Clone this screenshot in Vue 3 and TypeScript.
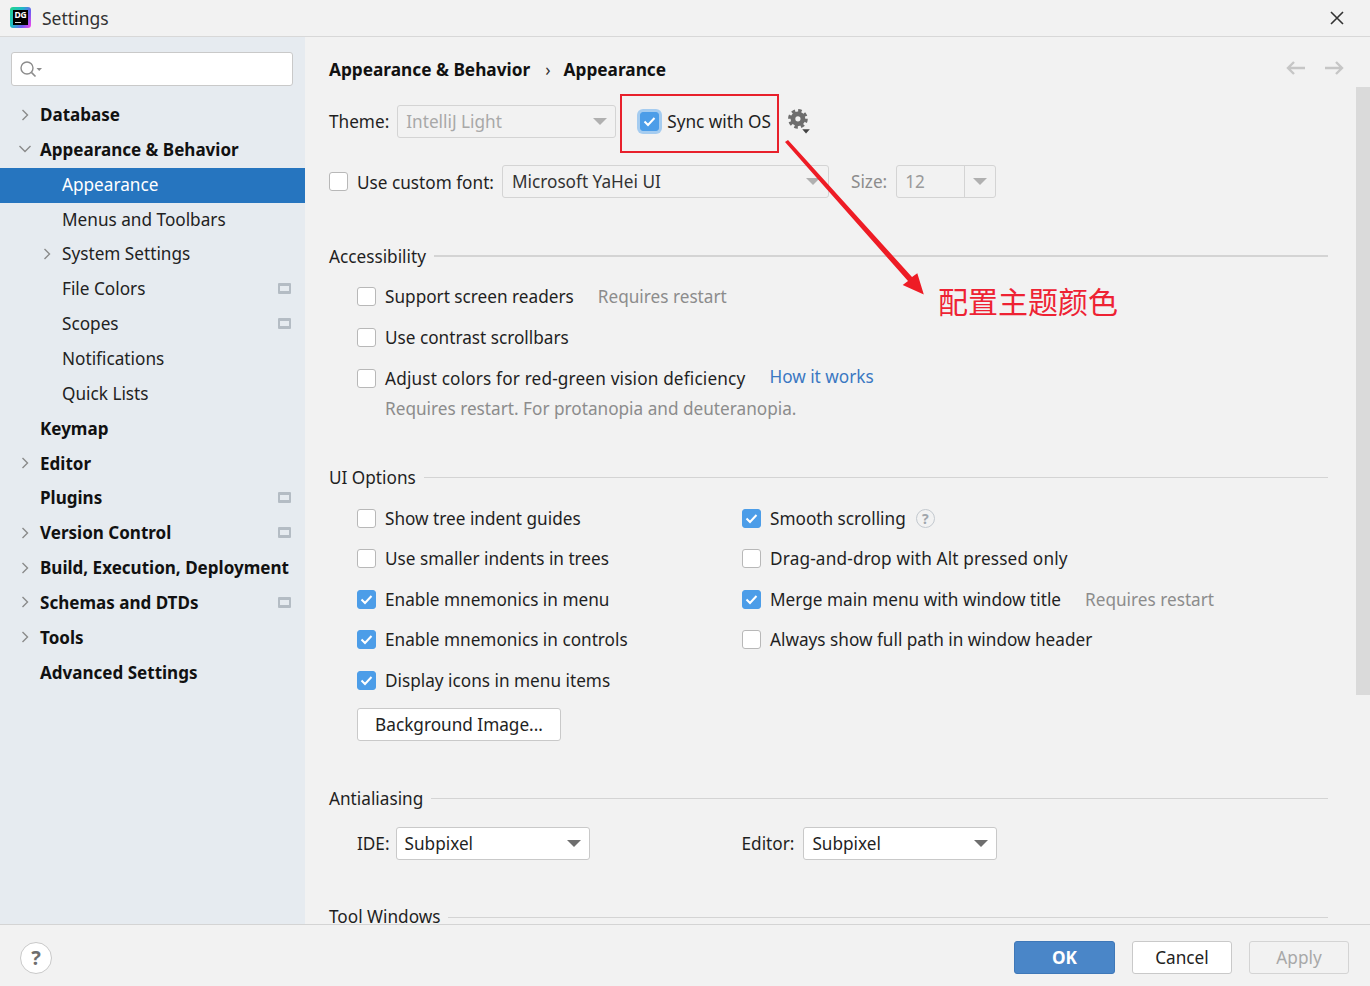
<template>
  <div class="dialog">
    <header class="titlebar">
      <div class="logo">
        <span class="logo-mark">DG<i></i></span>
      </div>
      <span class="title">Settings</span>
      <svg class="close" width="16" height="16" viewBox="0 0 16 16">
        <path d="M2 2 L14 14 M14 2 L2 14" stroke="#333" stroke-width="1.6" fill="none" />
      </svg>
    </header>

    <div class="body">
      <aside class="sidebar">
        <div class="search">
          <svg width="24" height="18" viewBox="0 0 24 18">
            <circle cx="8" cy="8" r="6" fill="none" stroke="#8c8c8c" stroke-width="1.4" />
            <path d="M12.4 12.4 L16.5 16.5" stroke="#8c8c8c" stroke-width="1.6" />
            <path d="M17.5 8 H23 L20.2 11 Z" fill="#8c8c8c" />
          </svg>
        </div>
        <ul class="tree">
          <li
            v-for="item in tree"
            :key="item.label"
            class="tree-row"
            :class="{ selected: item.selected, top: item.level === 0 }"
          >
            <span class="chevron" :class="{ nested: item.level === 1 }">
              <svg v-if="item.arrow === 'right'" class="right" width="10" height="14" viewBox="0 0 10 14">
                <path d="M2.5 2 L7.5 7 L2.5 12" fill="none" stroke="#8a8a8a" stroke-width="1.4" />
              </svg>
              <svg v-if="item.arrow === 'down'" width="14" height="10" viewBox="0 0 14 10">
                <path d="M1.5 2 L7 7.5 L12.5 2" fill="none" stroke="#8a8a8a" stroke-width="1.4" />
              </svg>
            </span>
            <span class="tree-label">{{ item.label }}</span>
            <span v-if="item.project" class="project-icon"><i></i></span>
          </li>
        </ul>
      </aside>

      <main class="content">
        <div class="breadcrumb">
          <b>Appearance &amp; Behavior</b>
          <span class="crumb-sep">›</span>
          <b>Appearance</b>
          <span class="nav-arrows">
            <svg width="22" height="16" viewBox="0 0 22 16">
              <path d="M20 8 H3 M9 2 L3 8 L9 14" fill="none" stroke="#c6c6c6" stroke-width="2.4" />
            </svg>
            <svg width="22" height="16" viewBox="0 0 22 16">
              <path d="M2 8 H19 M13 2 L19 8 L13 14" fill="none" stroke="#c6c6c6" stroke-width="2.4" />
            </svg>
          </span>
        </div>

        <div class="row theme-row">
          <span class="field-label">Theme:</span>
          <div class="combo disabled theme-combo">
            <span>IntelliJ Light</span>
            <i class="caret"></i>
          </div>
          <span class="check on focused"><svg width="13" height="11" viewBox="0 0 13 11"><path d="M1.5 5.5 L5 9 L11.5 2" fill="none" stroke="#fff" stroke-width="2" /></svg></span>
          <span class="sync-label">Sync with OS</span>
          <svg class="gear" width="24" height="26" viewBox="0 0 22 24">
            <circle cx="10" cy="10" r="4.6" fill="none" stroke="#6e6e6e" stroke-width="4.4" />
            <circle cx="10" cy="10" r="7.6" fill="none" stroke="#6e6e6e" stroke-width="3" stroke-dasharray="3.2 2.77" />
            <path d="M14 19.5 H21 L17.5 23.5 Z" fill="#444" />
          </svg>
        </div>

        <div class="row font-row">
          <span class="check"></span>
          <span class="font-label">Use custom font:</span>
          <div class="combo disabled-box font-combo">
            <span>Microsoft YaHei UI</span>
            <i class="caret"></i>
          </div>
          <span class="size-label">Size:</span>
          <div class="size-combo">
            <span class="size-value">12</span>
            <span class="size-btn"><i class="caret"></i></span>
          </div>
        </div>

        <div class="section accessibility">
          <span>Accessibility</span>
          <hr />
        </div>
        <div class="row opt first-acc">
          <span class="check"></span>
          <span>Support screen readers</span>
          <span class="hint gap">Requires restart</span>
        </div>
        <div class="row opt acc-next">
          <span class="check"></span>
          <span>Use contrast scrollbars</span>
        </div>
        <div class="row opt acc-next">
          <span class="check"></span>
          <span class="wide">Adjust colors for red-green vision deficiency</span>
          <a class="link">How it works</a>
        </div>
        <div class="hint sub-hint">Requires restart. For protanopia and deuteranopia.</div>

        <div class="section ui-options">
          <span>UI Options</span>
          <hr />
        </div>
        <div class="columns">
          <div class="col left-col">
            <div v-for="o in leftOptions" :key="o.label" class="row opt ui-row">
              <span class="check" :class="{ on: o.on }">
                <svg v-if="o.on" width="13" height="11" viewBox="0 0 13 11"><path d="M1.5 5.5 L5 9 L11.5 2" fill="none" stroke="#fff" stroke-width="2" /></svg>
              </span>
              <span>{{ o.label }}</span>
            </div>
          </div>
          <div class="col">
            <div v-for="o in rightOptions" :key="o.label" class="row opt ui-row">
              <span class="check" :class="{ on: o.on }">
                <svg v-if="o.on" width="13" height="11" viewBox="0 0 13 11"><path d="M1.5 5.5 L5 9 L11.5 2" fill="none" stroke="#fff" stroke-width="2" /></svg>
              </span>
              <span :class="{ wide: o.wide }">{{ o.label }}</span>
              <span v-if="o.help" class="help-mini">?</span>
              <span v-if="o.hint" class="hint hint-wide">{{ o.hint }}</span>
            </div>
          </div>
        </div>
        <button class="bg-button">Background Image...</button>

        <div class="section antialiasing">
          <span>Antialiasing</span>
          <hr />
        </div>
        <div class="row aa-row">
          <span class="aa-label">IDE:</span>
          <div class="combo aa-combo"><span>Subpixel</span><i class="caret dark"></i></div>
          <span class="aa-label editor">Editor:</span>
          <div class="combo aa-combo"><span>Subpixel</span><i class="caret dark"></i></div>
        </div>

        <div class="section tool-windows">
          <span>Tool Windows</span>
          <hr />
        </div>

        <div class="scrollbar"></div>
      </main>
    </div>

    <footer class="footer">
      <span class="help">?</span>
      <div class="buttons">
        <button class="btn primary">OK</button>
        <button class="btn">Cancel</button>
        <button class="btn ghost">Apply</button>
      </div>
    </footer>

    <!-- annotation drawn over the screenshot -->
    <div class="red-box"></div>
    <svg class="arrow" width="160" height="170" viewBox="0 0 160 170">
      <path d="M4 4 L7 2 L131 139 L136.3 135.3 L142.8 156.5 L121.7 147 L127 143 Z" fill="#ee1c25" />
    </svg>
    <div class="note">配置主题颜色</div>
  </div>
</template>

<script setup lang="ts">
interface TreeItem {
  label: string
  level: number
  arrow?: 'right' | 'down'
  project?: boolean
  selected?: boolean
}

interface Option {
  label: string
  on: boolean
  help?: boolean
  hint?: string
  wide?: boolean
}

const tree: TreeItem[] = [
  { label: 'Database', level: 0, arrow: 'right' },
  { label: 'Appearance & Behavior', level: 0, arrow: 'down' },
  { label: 'Appearance', level: 1, selected: true },
  { label: 'Menus and Toolbars', level: 1 },
  { label: 'System Settings', level: 1, arrow: 'right' },
  { label: 'File Colors', level: 1, project: true },
  { label: 'Scopes', level: 1, project: true },
  { label: 'Notifications', level: 1 },
  { label: 'Quick Lists', level: 1 },
  { label: 'Keymap', level: 0 },
  { label: 'Editor', level: 0, arrow: 'right' },
  { label: 'Plugins', level: 0, project: true },
  { label: 'Version Control', level: 0, arrow: 'right', project: true },
  { label: 'Build, Execution, Deployment', level: 0, arrow: 'right' },
  { label: 'Schemas and DTDs', level: 0, arrow: 'right', project: true },
  { label: 'Tools', level: 0, arrow: 'right' },
  { label: 'Advanced Settings', level: 0 },
]

const leftOptions: Option[] = [
  { label: 'Show tree indent guides', on: false },
  { label: 'Use smaller indents in trees', on: false },
  { label: 'Enable mnemonics in menu', on: true },
  { label: 'Enable mnemonics in controls', on: true },
  { label: 'Display icons in menu items', on: true },
]

const rightOptions: Option[] = [
  { label: 'Smooth scrolling', on: true, help: true },
  { label: 'Drag-and-drop with Alt pressed only', on: false, wide: true },
  { label: 'Merge main menu with window title', on: true, hint: 'Requires restart' },
  { label: 'Always show full path in window header', on: false },
]
</script>

<style>
html,
body {
  margin: 0;
  background: #f2f2f2;
}
</style>

<style scoped>
.dialog {
  position: relative;
  width: 1370px;
  height: 986px;
  display: flex;
  flex-direction: column;
  overflow: hidden;
  background: #f2f2f2;
  color: #1f1f1f;
  font-family: "Noto Sans", "Open Sans", sans-serif;
  font-size: 17.2px;
}

.titlebar {
  height: 36px;
  flex: none;
  display: flex;
  align-items: center;
  border-bottom: 1px solid #d8d8d8;
  padding-left: 10px;
}
.logo {
  width: 21px;
  height: 21px;
  margin-bottom: 1px;
  background: linear-gradient(120deg, #21d789 0%, #1fb8c9 40%, #6f5cf0 70%, #ff45ed 100%);
  display: flex;
  align-items: center;
  justify-content: center;
  border-radius: 3px;
}
.logo-mark {
  width: 15px;
  height: 15px;
  background: #000;
  color: #fff;
  font-size: 8.5px;
  font-weight: 700;
  line-height: 10px;
  text-align: center;
  letter-spacing: -0.3px;
  position: relative;
}
.logo-mark i {
  position: absolute;
  left: 2px;
  bottom: 2px;
  width: 6px;
  height: 1px;
  background: #ddd;
}
.title {
  margin-left: 11px;
  margin-bottom: 1px;
  font-size: 17.5px;
  color: #333;
}
.close {
  margin-left: auto;
  margin-right: 25px;
}

.body {
  flex: 1;
  display: flex;
  min-height: 0;
}

.sidebar {
  width: 305px;
  flex: none;
  background: #e6ebf0;
  padding-top: 15px;
}
.search {
  width: 273px;
  height: 32px;
  margin-left: 11px;
  background: #fff;
  border: 1px solid #c9c9c9;
  border-radius: 3px;
  display: flex;
  align-items: center;
  padding-left: 7px;
}
.tree {
  list-style: none;
  margin: 12.2px 0 0;
  padding: 0;
}
.tree-row {
  height: 34.85px;
  display: flex;
  align-items: center;
  position: relative;
  color: #222;
}
.tree-row.top {
  font-weight: 700;
  font-size: 17.05px;
  color: #111;
}
.tree-row.selected {
  background: #2675bf;
  color: #fff;
}
.tree-label {
  padding-bottom: 2px;
}
.chevron {
  width: 40px;
  flex: none;
  display: flex;
  align-items: center;
  padding-left: 18px;
  padding-bottom: 2px;
  box-sizing: border-box;
}
.chevron svg {
  flex: none;
}
.chevron svg.right {
  margin-left: 2px;
}
.chevron.nested {
  width: 62px;
  padding-left: 40px;
}
.project-icon {
  position: absolute;
  left: 278px;
  top: 11px;
  width: 13px;
  height: 11px;
  background: #b4bcc4;
  border-radius: 1px;
  display: flex;
  align-items: center;
  justify-content: center;
}
.project-icon i {
  width: 9px;
  height: 5px;
  background: #e6ebf0;
}

.content {
  flex: 1;
  position: relative;
  padding-left: 24px;
  min-width: 0;
  overflow: hidden;
}
.breadcrumb {
  height: 24px;
  margin-top: 20px;
  display: flex;
  align-items: center;
  font-size: 17.25px;
  color: #111;
}
.crumb-sep {
  margin: 0 13px 0 15px;
  color: #333;
}
.nav-arrows {
  position: absolute;
  right: 25px;
  top: 23px;
  display: flex;
  gap: 16px;
}
.row {
  display: flex;
  align-items: center;
}
.theme-row {
  height: 34px;
  margin-top: 23px;
}
.field-label {
  margin-right: 8px;
}
.combo {
  height: 33px;
  border: 1px solid #c9c9c9;
  border-radius: 3px;
  background: #fff;
  display: flex;
  align-items: center;
  justify-content: space-between;
  padding: 0 8px;
  box-sizing: border-box;
}
.combo.disabled {
  background: #f2f2f2;
  color: #a8a8a8;
  border-color: #d4d4d4;
}
.disabled-box {
  background: #f2f2f2;
  border-color: #d4d4d4;
  padding-left: 9px;
  color: #333;
}
.theme-combo {
  width: 219px;
}
.caret {
  width: 0;
  height: 0;
  border-left: 7px solid transparent;
  border-right: 7px solid transparent;
  border-top: 7px solid #b0b0b0;
}
.caret.dark {
  border-top-color: #6e6e6e;
}
.check {
  width: 19px;
  height: 19px;
  flex: none;
  box-sizing: border-box;
  background: #fff;
  border: 1px solid #b8b8b8;
  border-radius: 3px;
  display: flex;
  align-items: center;
  justify-content: center;
  margin-right: 9px;
}
.check.on {
  background: #4c9de8;
  border-color: #4c9de8;
}
.check.focused {
  margin-left: 24px;
  box-shadow: 0 0 0 3px #a5ccf0;
  margin-right: 8px;
}
.sync-label {
  white-space: nowrap;
}
.gear {
  margin-left: 16px;
}
.font-row {
  height: 34px;
  margin-top: 26px;
}
.font-label {
  margin-right: 8px;
  padding-top: 3px;
}
.font-combo {
  width: 327px;
}
.size-label {
  margin-left: 22px;
  margin-right: 9px;
  color: #8c8c8c;
}
.size-combo {
  width: 100px;
  height: 33px;
  box-sizing: border-box;
  border: 1px solid #d4d4d4;
  border-radius: 3px;
  display: flex;
  align-items: center;
  color: #9a9a9a;
}
.size-value {
  width: 68px;
  padding-left: 8px;
  box-sizing: border-box;
  line-height: 31px;
  border-right: 1px solid #d4d4d4;
}
.size-btn {
  flex: 1;
  display: flex;
  justify-content: center;
}

.section {
  display: flex;
  align-items: center;
  width: 999px;
  height: 24px;
}
.section hr {
  flex: 1;
  height: 0;
  margin: 0 0 0 8px;
  border: 0;
  border-top: 1px solid #d4d4d4;
}
.accessibility {
  margin-top: 46px;
}
.accessibility hr {
  border-top-width: 2px;
}
.opt {
  padding-left: 28px;
}
.first-acc {
  height: 24px;
  margin-top: 16px;
}
.acc-next {
  height: 24px;
  margin-top: 17px;
}
.wide {
  letter-spacing: 0.165px;
}
.hint {
  color: #8c8c8c;
}
.gap {
  margin-left: 24px;
}
.link {
  margin-left: 24px;
  color: #3a78c2;
  position: relative;
  top: -2px;
}
.sub-hint {
  margin: 7px 0 0 56px;
  height: 24px;
  line-height: 24px;
}
.ui-options {
  margin-top: 44px;
}
.columns {
  display: flex;
  margin-top: 9px;
}
.left-col {
  width: 385px;
  flex: none;
}
.ui-row {
  height: 40.5px;
  white-space: nowrap;
}
.help-mini {
  width: 19px;
  height: 19px;
  margin-left: 10px;
  box-sizing: border-box;
  border: 1.5px solid #c3c9cf;
  border-radius: 50%;
  display: flex;
  align-items: center;
  justify-content: center;
  font-size: 14px;
  font-weight: 700;
  color: #a0a6ac;
}
.hint-wide {
  margin-left: 24px;
}
.bg-button {
  display: block;
  margin: 7px 0 0 28px;
  width: 204px;
  height: 33px;
  background: #fff;
  border: 1px solid #c9c9c9;
  border-radius: 3px;
  font: inherit;
  color: #222;
  padding: 0;
}
.antialiasing {
  margin-top: 46px;
}
.aa-row {
  height: 34px;
  margin-top: 16px;
  padding-left: 28px;
}
.aa-label {
  margin-right: 6px;
}
.aa-label.editor {
  margin-left: 152px;
  margin-right: 9px;
}
.aa-combo {
  width: 194px;
}
.tool-windows {
  margin-top: 46px;
  height: 20px;
  line-height: 15px;
}
.tool-windows hr {
  margin-top: 2px;
}
.scrollbar {
  position: absolute;
  top: 50px;
  right: 0;
  width: 14px;
  height: 608px;
  background: #dadada;
}

.footer {
  height: 57px;
  padding: 4px 21px 0 20px;
  flex: none;
  border-top: 1px solid #d4d4d4;
  display: flex;
  align-items: center;
  justify-content: space-between;
}
.help {
  width: 32px;
  height: 32px;
  box-sizing: border-box;
  background: #fff;
  border: 1px solid #c9c9c9;
  border-radius: 50%;
  display: flex;
  align-items: center;
  justify-content: center;
  font-weight: 700;
  font-size: 20px;
  color: #6e6e6e;
}
.buttons {
  display: flex;
  gap: 17px;
}
.btn {
  width: 100px;
  height: 33px;
  background: #fff;
  border: 1px solid #c9c9c9;
  border-radius: 3px;
  font: inherit;
  color: #222;
  padding: 0;
}
.btn.primary {
  width: 101px;
  background: #4a86c8;
  border-color: #3f78b8;
  color: #fff;
  font-weight: 700;
}
.btn.ghost {
  background: #f2f2f2;
  border-color: #d4d4d4;
  color: #a8a8a8;
}

.red-box {
  position: absolute;
  left: 620px;
  top: 94px;
  width: 159px;
  height: 59px;
  box-sizing: border-box;
  border: 2px solid #e8202c;
}
.arrow {
  position: absolute;
  left: 781px;
  top: 138px;
  pointer-events: none;
}
.note {
  position: absolute;
  left: 938px;
  top: 279px;
  font-family: "Noto Sans CJK SC", sans-serif;
  font-size: 30px;
  line-height: 42px;
  color: #ee2233;
  white-space: nowrap;
}
</style>
